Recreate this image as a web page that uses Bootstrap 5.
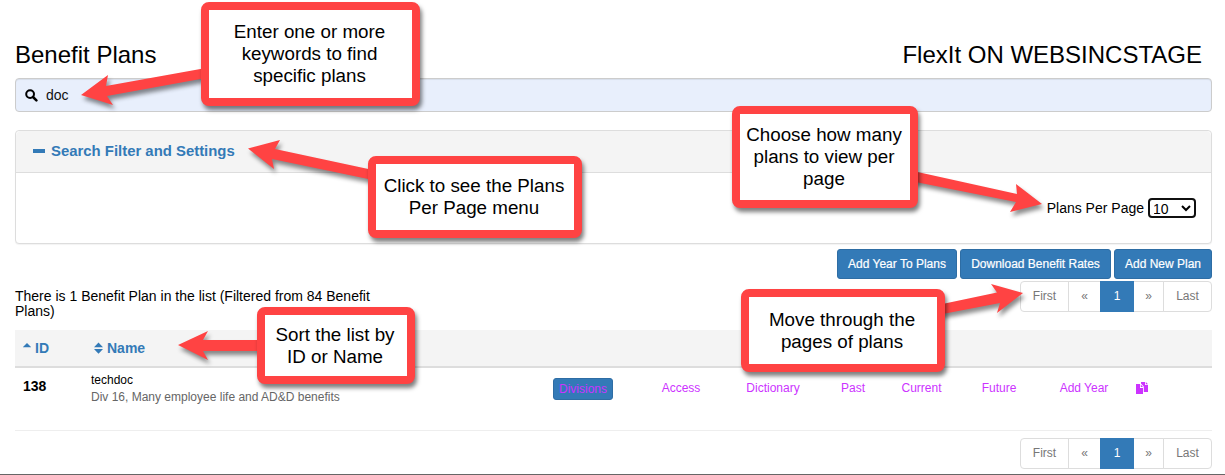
<!DOCTYPE html>
<html lang="en">
<head>
<meta charset="utf-8">
<meta name="viewport" content="width=device-width, initial-scale=1">
<title>Benefit Plans</title>
<link href="https://cdn.jsdelivr.net/npm/bootstrap@5.3.0/dist/css/bootstrap.min.css" rel="stylesheet">
<style>
body{font-family:"Liberation Sans",Arial,sans-serif;font-size:14px;line-height:15px;color:#000;background:#fff;height:475px;overflow:hidden}
.page{height:475px;padding:0 13px 0 15px;border-bottom:1px solid #666}
.page a{color:#337ab7;text-decoration:none}
.titles{height:78px;padding:42px 10px 0 0}
.titles h1{font-size:24px;line-height:26px;font-weight:400;margin:0}
.search{height:34px;background:#e8effc;border:1px solid #ccc;border-radius:4px;padding-left:9px;box-shadow:inset 0 1px 1px rgba(0,0,0,.075)}
.search input{font-size:14px;line-height:20px;background:transparent;border:0;outline:0;padding:0;margin-left:8px;color:#111}
.filter{height:114px;margin-top:18px;border:1px solid #ddd;border-radius:4px;box-shadow:0 1px 1px rgba(0,0,0,.05)}
.filter .card-header{height:42px;background:#f4f4f4;border-bottom:1px solid #ddd;padding:0 17px;font-size:14.9px;font-weight:700}
.dash{width:12px;height:4px;background:#337ab7;margin:-2px 6px 0 0}
.filter .card-body{padding:0 15px}
.filter select{width:48px;height:20px;font:14px/16px "Liberation Sans",Arial,sans-serif;border:2px solid #101010;border-radius:4px;background:#fff;color:#000;padding:0 0 2px;text-indent:-1px;margin-left:4px}
.actions{gap:3px;margin-top:5px}
.actions .btn{height:30px;background:#337ab7;border:1px solid #2e6da4;border-radius:3px;color:#fff;font-size:12px;line-height:18px;padding:5px 0;-webkit-text-stroke:.2px #fff}
.w-year{width:120px}.w-rates{width:151px}.w-new{width:98px}
.summary{height:51px}
.summary p{width:375px;margin:10px 0 0}
.pager{margin:2px 0 0;height:31px}
.pager .page-link{height:31px;font-size:12px;line-height:18px;padding:5px 0;text-align:center;color:#777!important;border-color:#ddd}
.pager .active .page-link{background:#337ab7;border-color:#337ab7;color:#fff!important}
.pager li:first-child .page-link{width:49px;border-radius:4px 0 0 4px}
.pager li:nth-child(2) .page-link{width:33px}
.pager li:nth-child(3) .page-link{width:34px}
.pager li:nth-child(4) .page-link{width:31px}
.pager li:last-child .page-link{width:49px;border-radius:0 4px 4px 0}
.plans{table-layout:fixed;width:1197px;margin:0;font-size:12px;color:#000;border-collapse:separate;border-spacing:0}
.plans>:not(caption)>*>*{padding:0;box-shadow:none;color:inherit}
.plans thead th{height:38px;background:#f4f4f4;border-bottom:2px solid #ddd;font-size:14px;vertical-align:middle}
.plans tbody td{height:63px;border-bottom:1px solid #eee;vertical-align:top;text-align:center;line-height:17px;padding-top:12px}
.plans tbody td.idcell{font-size:14px;font-weight:700;text-align:left;padding:10px 0 0 8px}
.plans tbody td.namecell{text-align:left;padding-top:4px}
.desc{color:#666}
.plans tbody a{color:#c3f}
.plans .divbtn{display:inline-block;width:60px;height:22px;line-height:20px;background:#337ab7;border:1px solid #2e6da4;border-radius:3px;margin-top:-2px}
.copyico{margin-top:-1px}
.note{position:absolute;border:8px solid #ff4343;border-radius:8px;background:#fff;font-size:18.8px;line-height:22px;text-align:center;display:flex;align-items:center;justify-content:center;white-space:nowrap;box-shadow:2px 4px 4px rgba(0,0,0,.5)}
.arrows{position:absolute;left:0;top:0;pointer-events:none}
.arrows g{filter:drop-shadow(2px 4px 2px rgba(0,0,0,.45))}
.n1{left:201px;top:2px;width:219px;height:104px;padding-right:2px}
.n2{left:368px;top:156px;width:214px;height:82px;padding-right:2px}
.n3{left:732px;top:106px;width:186px;height:102px;padding-right:2px}
.n4{left:741px;top:289px;width:204px;height:83px;padding-right:2px}
.n5{left:257px;top:307px;width:158px;height:77px;padding-right:2px}
</style>
<script src="https://cdn.jsdelivr.net/npm/bootstrap@5.3.0/dist/js/bootstrap.bundle.min.js"></script>
</head>
<body>
<main class="page">
  <header class="titles d-flex justify-content-between">
    <h1>Benefit Plans</h1><h1>FlexIt ON WEBSINCSTAGE</h1>
  </header>
  <div class="search d-flex align-items-center">
    <svg width="13" height="13" viewBox="0 0 13 13" fill="none" stroke="#000"><circle cx="5.1" cy="5.1" r="3.9" stroke-width="2"/><path d="M8 8l3.4 3.4" stroke-width="2.5" stroke-linecap="round"/></svg>
    <input type="text" value="doc" aria-label="Search plans">
  </div>
  <section class="card filter">
    <div class="card-header d-flex align-items-center"><span class="dash"></span><a href="#">Search Filter and Settings</a></div>
    <div class="card-body d-flex align-items-center justify-content-end">
      <label for="per">Plans Per Page</label><select id="per"><option>10</option></select>
    </div>
  </section>
  <div class="actions d-flex justify-content-end">
    <button class="btn w-year">Add Year To Plans</button><button class="btn w-rates">Download Benefit Rates</button><button class="btn w-new">Add New Plan</button>
  </div>
  <div class="summary d-flex justify-content-between">
    <p>There is 1 Benefit Plan in the list (Filtered from 84 Benefit Plans)</p>
    <ul class="pagination pager">
      <li class="page-item"><a class="page-link" href="#">First</a></li><li class="page-item"><a class="page-link" href="#">«</a></li><li class="page-item active"><a class="page-link" href="#">1</a></li><li class="page-item"><a class="page-link" href="#">»</a></li><li class="page-item"><a class="page-link" href="#">Last</a></li>
    </ul>
  </div>
  <table class="table plans">
    <colgroup><col style="width:76px"><col style="width:454px"><col style="width:76px"><col style="width:120px"><col style="width:64px"><col style="width:96px"><col style="width:41px"><col style="width:114px"><col style="width:56px"><col style="width:60px"><col style="width:40px"></colgroup>
    <thead><tr>
      <th><a href="#" class="d-flex ps-2"><svg class="me-1" width="8" height="14" viewBox="0 0 8 14" fill="#337ab7"><path d="M-.2 6.3L4 2l4.2 4.3z"/></svg>ID</a></th>
      <th colspan="10"><a href="#" class="d-flex" style="padding-left:3px"><svg class="me-1" width="9" height="14" viewBox="0 0 9 14" fill="#337ab7"><path d="M0 6.3L4.5 1.6 9 6.3zM0 8L4.5 12.7 9 8z"/></svg>Name</a></th>
    </tr></thead>
    <tbody><tr>
      <td class="idcell">138</td>
      <td class="namecell"><div>techdoc</div><div class="desc">Div 16, Many employee life and AD&amp;D benefits</div></td>
      <td><a href="#" class="divbtn">Divisions</a></td>
      <td><a href="#">Access</a></td><td><a href="#">Dictionary</a></td><td><a href="#">Past</a></td><td><a href="#">Current</a></td><td><a href="#">Future</a></td><td><a href="#">Add Year</a></td>
      <td><a href="#" aria-label="Copy"><svg class="copyico" width="12" height="12" viewBox="0 0 12 12" fill="#c3f"><path d="M0 2h4v4h3v6H0zM4.8 2.6L7 5H4.8zM5 0h4v3h3v7H7.8V4.5L5 1.6zM9.8 0L12 2.3H9.8z"/></svg></a></td><td></td>
    </tr></tbody>
  </table>
  <ul class="pagination pager justify-content-end" style="margin-top:7px">
    <li class="page-item"><a class="page-link" href="#">First</a></li><li class="page-item"><a class="page-link" href="#">«</a></li><li class="page-item active"><a class="page-link" href="#">1</a></li><li class="page-item"><a class="page-link" href="#">»</a></li><li class="page-item"><a class="page-link" href="#">Last</a></li>
  </ul>
</main>
<svg class="arrows" width="1225" height="475" fill="#ff4343"><g>
  <path d="M81 95L108 75 106 86 206 68V78L107 96 113 105z"/>
  <path d="M248 148.5L280 140 275 149 373 170V180L272 159 274 169z"/>
  <path d="M1042 204L1016 184 1017 194 913 171V181.5L1016 202 1010 212z"/>
  <path d="M1023 293L991 284 997 292.5 940 304.5V314.5L1000 303 997 313z"/>
  <path d="M178 345L208 331 203 340H262V351H203L208 360z"/>
</g></svg>
<div class="note n1">Enter one or more<br>keywords to find<br>specific plans</div>
<div class="note n2">Click to see the Plans<br>Per Page menu</div>
<div class="note n3">Choose how many<br>plans to view per<br>page</div>
<div class="note n4">Move through the<br>pages of plans</div>
<div class="note n5">Sort the list by<br>ID or Name</div>
</body>
</html>
